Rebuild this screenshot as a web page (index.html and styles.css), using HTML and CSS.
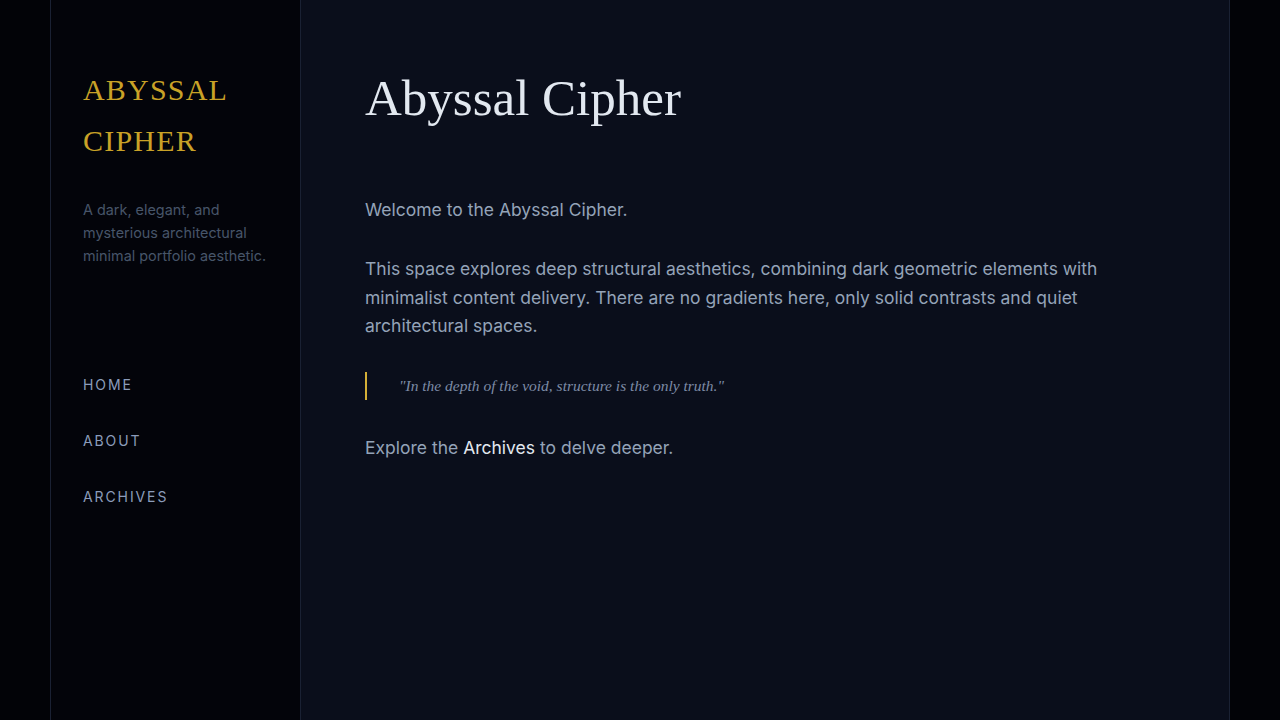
FILE: index.html
```html
<!DOCTYPE html>
<html lang="en">
<head>
<meta charset="utf-8">
<title>Abyssal Cipher</title>
<link rel="stylesheet" href="styles.css">
</head>
<body>
<div class="frame">
  <aside class="sidebar">
    <h1 class="brand">ABYSSAL<br>CIPHER</h1>
    <p class="tagline">A dark, elegant, and mysterious architectural minimal portfolio aesthetic.</p>
    <nav class="nav">
      <a href="#" class="nav-link">HOME</a>
      <a href="#" class="nav-link">ABOUT</a>
      <a href="#" class="nav-link">ARCHIVES</a>
    </nav>
  </aside>
  <main class="content">
    <h2 class="title">Abyssal Cipher</h2>
    <p class="text">Welcome to the Abyssal Cipher.</p>
    <p class="text">This space explores deep structural aesthetics, combining dark geometric elements with minimalist content delivery. There are no gradients here, only solid contrasts and quiet architectural spaces.</p>
    <blockquote class="quote">"In the depth of the void, structure is the only truth."</blockquote>
    <p class="text">Explore the <a href="#" class="link">Archives</a> to delve deeper.</p>
  </main>
</div>
</body>
</html>
```

FILE: styles.css
```css
* { box-sizing: border-box; }
html, body { margin: 0; padding: 0; height: 100%; }
body {
  background: #020307;
  font-family: "Inter", "Liberation Sans", sans-serif;
}
.frame {
  width: 1180px;
  margin: 0 auto;
  min-height: 100vh;
  display: flex;
  border-left: 1px solid #1a2133;
  border-right: 1px solid #1a2133;
}
.sidebar {
  width: 250px;
  flex: 0 0 250px;
  background: #03040a;
  border-right: 1px solid #1a2133;
  padding: 64px 32px 32px 32px;
}
.brand {
  margin: 0;
  font-family: "Liberation Serif", "DejaVu Serif", serif;
  font-weight: 400;
  font-size: 30px;
  line-height: 51px;
  letter-spacing: 1.2px;
  color: #c9a227;
}
.tagline {
  margin: 32px 0 0 0;
  font-size: 14.4px;
  line-height: 23px;
  color: #475569;
}
.nav {
  margin-top: 108px;
  display: flex;
  flex-direction: column;
  gap: 36px;
}
.nav-link {
  font-size: 14px;
  line-height: 20px;
  letter-spacing: 1.9px;
  color: #8b9cba;
  text-decoration: none;
}
.content {
  flex: 1;
  background: #0a0e1b;
  padding: 64px 64px;
}
.title {
  margin: 0 0 64px 0;
  font-family: "Liberation Serif", "DejaVu Serif", serif;
  font-weight: 400;
  font-size: 51px;
  line-height: 68px;
  color: #e2e8f0;
}
.text {
  margin: 0 0 31px 0;
  font-size: 17.5px;
  line-height: 28.4px;
  color: #94a3b8;
  max-width: 760px;
}
.quote {
  margin: 0 0 34px 0;
  padding-left: 32px;
  border-left: 2px solid #d4af37;
  font-family: "Liberation Serif", "DejaVu Serif", serif;
  font-style: italic;
  font-size: 15.5px;
  line-height: 28px;
  color: #7d8ba6;
}
.link {
  color: #e2e8f0;
  text-decoration: none;
}
```
